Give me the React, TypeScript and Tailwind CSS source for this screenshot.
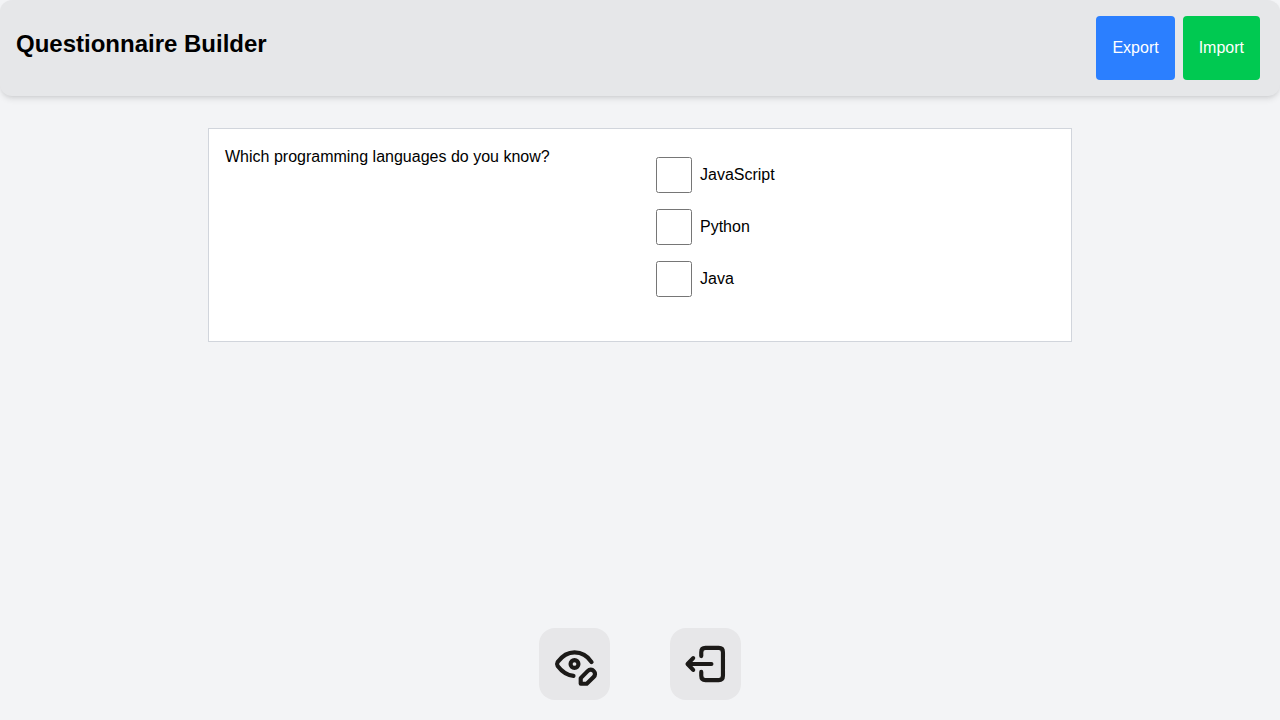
import type { ReactNode } from "react";

const languages = ["JavaScript", "Python", "Java"];

function ToolButton({ label, children }: { label: string; children: ReactNode }) {
  return (
    <button type="button" aria-label={label} className="h-[72px] w-[71px] rounded-2xl bg-[#e7e7e9] text-[#1c1a18]">
      <svg
        viewBox="0 0 72 72"
        className="size-full"
        fill="none"
        stroke="currentColor"
        strokeWidth="4.2"
        strokeLinecap="round"
        strokeLinejoin="round"
        aria-hidden="true"
      >
        {children}
      </svg>
    </button>
  );
}

export default function App() {
  return (
    <div className="flex min-h-screen flex-col bg-gray-100 font-['Liberation_Sans',sans-serif] text-base text-black">
      <header className="flex items-start justify-between rounded-xl bg-[#e6e7e9] py-4 pr-5 pl-4 shadow-md">
        <h1 className="pt-3 text-2xl font-bold">Questionnaire Builder</h1>
        <div className="flex gap-2">
          <button type="button" className="h-16 rounded-sm bg-blue-500 px-4 text-white">
            Export
          </button>
          <button type="button" className="h-16 rounded-sm bg-green-500 px-4 text-white">
            Import
          </button>
        </div>
      </header>

      <main className="flex-1 px-4 pt-8">
        <fieldset
          aria-labelledby="question"
          className="mx-auto grid max-w-[864px] grid-cols-2 border border-gray-300 bg-white p-4"
        >
          <p id="question">Which programming languages do you know?</p>
          <div className="px-4 py-3">
            {languages.map((language) => (
              <label key={language} className="mb-4 flex items-center gap-2">
                <input type="checkbox" name="languages" value={language} className="size-9" />
                {language}
              </label>
            ))}
          </div>
        </fieldset>
      </main>

      <footer className="flex justify-center gap-[60px] pb-5">
        <ToolButton label="Edit preview">
          <path d="M53.3 34C49 27.5 43 24.2 36 24.2C28.5 24.2 23 28.5 18.9 34Q17.8 36 18.9 38C23 43.5 28 47.3 35 48" />
          <circle cx="36" cy="36" r="4" />
          <path d="M42.3 56V50.3L49.3 43.2C51.3 41.2 53.8 41.2 55.6 43.2C57.3 45 57.2 47.4 55.4 49.2L48.4 56Z" />
        </ToolButton>
        <ToolButton label="Exit">
          <path d="M31.7 28V24Q31.7 19.7 36 19.7H49.4Q53.7 19.7 53.7 24V48Q53.7 52.3 49.4 52.3H36Q31.7 52.3 31.7 48V44" />
          <path d="M42 36H18M23.5 30L17.8 36L23.5 42" />
        </ToolButton>
      </footer>
    </div>
  );
}
